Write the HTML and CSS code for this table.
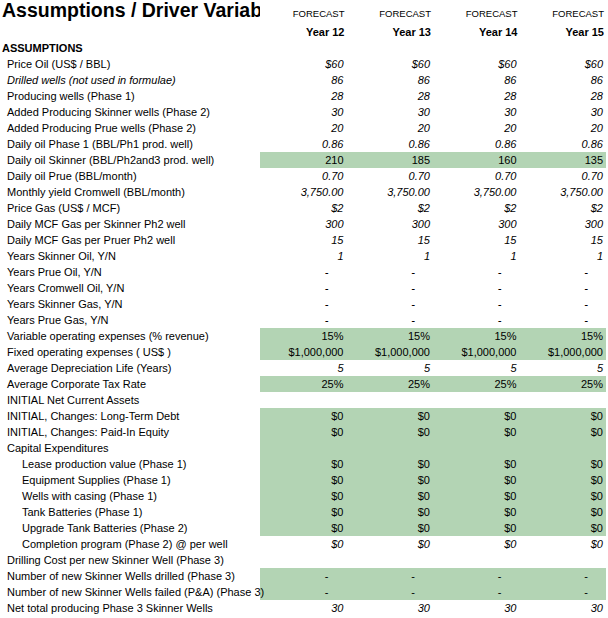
FILE: index.html
```html
<!DOCTYPE html>
<html>
<head>
<meta charset="utf-8">
<link rel="stylesheet" href="styles.css">
</head>
<body>
<table class="sheet">
  <colgroup>
    <col class="c-label"><col class="c-val"><col class="c-val"><col class="c-val"><col class="c-val">
  </colgroup>
  <tr class="r-title">
    <td class="title"><div class="clip">Assumptions / Driver Variables</div></td>
    <td class="fc">FORECAST</td><td class="fc">FORECAST</td><td class="fc">FORECAST</td><td class="fc">FORECAST</td>
  </tr>
  <tr class="r-year">
    <td></td><td class="yr">Year 12</td><td class="yr">Year 13</td><td class="yr">Year 14</td><td class="yr">Year 15</td>
  </tr>
  <tr><td class="sec">ASSUMPTIONS</td><td></td><td></td><td></td><td></td></tr>
  <tr class="it"><td class="lbl">Price Oil (US$ / BBL)</td><td>$60</td><td>$60</td><td>$60</td><td>$60</td></tr>
  <tr class="it"><td class="lbl lbl-it">Drilled wells (not used in formulae)</td><td>86</td><td>86</td><td>86</td><td>86</td></tr>
  <tr class="it"><td class="lbl">Producing wells (Phase 1)</td><td>28</td><td>28</td><td>28</td><td>28</td></tr>
  <tr class="it"><td class="lbl">Added Producing Skinner wells (Phase 2)</td><td>30</td><td>30</td><td>30</td><td>30</td></tr>
  <tr class="it"><td class="lbl">Added Producing Prue wells (Phase 2)</td><td>20</td><td>20</td><td>20</td><td>20</td></tr>
  <tr class="it"><td class="lbl">Daily oil Phase 1 (BBL/Ph1 prod. well)</td><td>0.86</td><td>0.86</td><td>0.86</td><td>0.86</td></tr>
  <tr class="g"><td class="lbl">Daily oil Skinner (BBL/Ph2and3 prod. well)</td><td>210</td><td>185</td><td>160</td><td>135</td></tr>
  <tr class="it"><td class="lbl">Daily oil Prue (BBL/month)</td><td>0.70</td><td>0.70</td><td>0.70</td><td>0.70</td></tr>
  <tr class="it"><td class="lbl">Monthly yield Cromwell (BBL/month)</td><td>3,750.00</td><td>3,750.00</td><td>3,750.00</td><td>3,750.00</td></tr>
  <tr class="it"><td class="lbl">Price Gas (US$ / MCF)</td><td>$2</td><td>$2</td><td>$2</td><td>$2</td></tr>
  <tr class="it"><td class="lbl">Daily MCF Gas per Skinner Ph2 well</td><td>300</td><td>300</td><td>300</td><td>300</td></tr>
  <tr class="it"><td class="lbl">Daily MCF Gas per Pruer Ph2 well</td><td>15</td><td>15</td><td>15</td><td>15</td></tr>
  <tr class="it"><td class="lbl">Years Skinner Oil, Y/N</td><td>1</td><td>1</td><td>1</td><td>1</td></tr>
  <tr class="it dash"><td class="lbl">Years Prue Oil, Y/N</td><td>-</td><td>-</td><td>-</td><td>-</td></tr>
  <tr class="it dash"><td class="lbl">Years Cromwell Oil, Y/N</td><td>-</td><td>-</td><td>-</td><td>-</td></tr>
  <tr class="it dash"><td class="lbl">Years Skinner Gas, Y/N</td><td>-</td><td>-</td><td>-</td><td>-</td></tr>
  <tr class="it dash"><td class="lbl">Years Prue Gas, Y/N</td><td>-</td><td>-</td><td>-</td><td>-</td></tr>
  <tr class="g"><td class="lbl">Variable operating expenses (% revenue)</td><td>15%</td><td>15%</td><td>15%</td><td>15%</td></tr>
  <tr class="g"><td class="lbl">Fixed operating expenses ( US$ )</td><td>$1,000,000</td><td>$1,000,000</td><td>$1,000,000</td><td>$1,000,000</td></tr>
  <tr class="it"><td class="lbl">Average Depreciation Life (Years)</td><td>5</td><td>5</td><td>5</td><td>5</td></tr>
  <tr class="g"><td class="lbl">Average Corporate Tax Rate</td><td>25%</td><td>25%</td><td>25%</td><td>25%</td></tr>
  <tr><td class="lbl">INITIAL Net Current Assets</td><td></td><td></td><td></td><td></td></tr>
  <tr class="g"><td class="lbl">INITIAL, Changes: Long-Term Debt</td><td>$0</td><td>$0</td><td>$0</td><td>$0</td></tr>
  <tr class="g"><td class="lbl">INITIAL, Changes: Paid-In Equity</td><td>$0</td><td>$0</td><td>$0</td><td>$0</td></tr>
  <tr class="g"><td class="lbl">Capital Expenditures</td><td></td><td></td><td></td><td></td></tr>
  <tr class="g"><td class="lbl sub">Lease production value (Phase 1)</td><td>$0</td><td>$0</td><td>$0</td><td>$0</td></tr>
  <tr class="g"><td class="lbl sub">Equipment Supplies (Phase 1)</td><td>$0</td><td>$0</td><td>$0</td><td>$0</td></tr>
  <tr class="g"><td class="lbl sub">Wells with casing (Phase 1)</td><td>$0</td><td>$0</td><td>$0</td><td>$0</td></tr>
  <tr class="g"><td class="lbl sub">Tank Batteries (Phase 1)</td><td>$0</td><td>$0</td><td>$0</td><td>$0</td></tr>
  <tr class="g"><td class="lbl sub">Upgrade Tank Batteries (Phase 2)</td><td>$0</td><td>$0</td><td>$0</td><td>$0</td></tr>
  <tr class="it"><td class="lbl sub">Completion program (Phase 2) @ per well</td><td>$0</td><td>$0</td><td>$0</td><td>$0</td></tr>
  <tr><td class="lbl">Drilling Cost per new Skinner Well (Phase 3)</td><td></td><td></td><td></td><td></td></tr>
  <tr class="g dash"><td class="lbl">Number of new Skinner Wells drilled (Phase 3)</td><td>-</td><td>-</td><td>-</td><td>-</td></tr>
  <tr class="g dash"><td class="lbl">Number of new Skinner Wells failed (P&amp;A) (Phase 3)</td><td>-</td><td>-</td><td>-</td><td>-</td></tr>
  <tr class="it"><td class="lbl">Net total producing Phase 3 Skinner Wells</td><td>30</td><td>30</td><td>30</td><td>30</td></tr>
</table>
</body>
</html>
```

FILE: styles.css
```css
html, body {
  margin: 0;
  padding: 0;
  background: #ffffff;
}

.sheet {
  border-collapse: collapse;
  table-layout: fixed;
  width: 606px;
  font-family: "Liberation Sans", Arial, sans-serif;
  font-size: 11px;
  color: #000;
}

.c-label { width: 260px; }
.c-val { width: 86.5px; }

.sheet td {
  height: 16px;
  padding: 0 3px 0 0;
  line-height: 16px;
  text-align: right;
  white-space: nowrap;
  vertical-align: bottom;
}

.sheet td.lbl,
.sheet td.sec,
.sheet td.title {
  text-align: left;
  overflow: visible;
}

.r-title td {
  height: 24px;
  vertical-align: top;
}

.sheet td.title {
  padding: 0 0 0 2px;
}

.clip {
  width: 258px;
  overflow: hidden;
  font-size: 19.5px;
  font-weight: bold;
  line-height: 21px;
}

.sheet td.fc {
  height: 15px;
  font-size: 9.5px;
  line-height: 10px;
  padding-top: 9px;
  padding-right: 2px;
}

.sheet td.yr {
  font-weight: bold;
  padding-right: 2px;
}

.sheet td.sec {
  font-weight: bold;
  padding-left: 2px;
}

.sheet td.lbl {
  padding-left: 7px;
}

.sheet td.sub {
  padding-left: 22px;
}

.lbl-it {
  font-style: italic;
}

.it td {
  font-style: italic;
}

.it td.lbl {
  font-style: normal;
}

.it td.lbl-it {
  font-style: italic;
}

.dash td {
  padding-right: 18px;
}

.dash td.lbl {
  padding-right: 0;
}

.g td {
  background: #b3d4b4;
}

.g td.lbl {
  background: #ffffff;
}
```
